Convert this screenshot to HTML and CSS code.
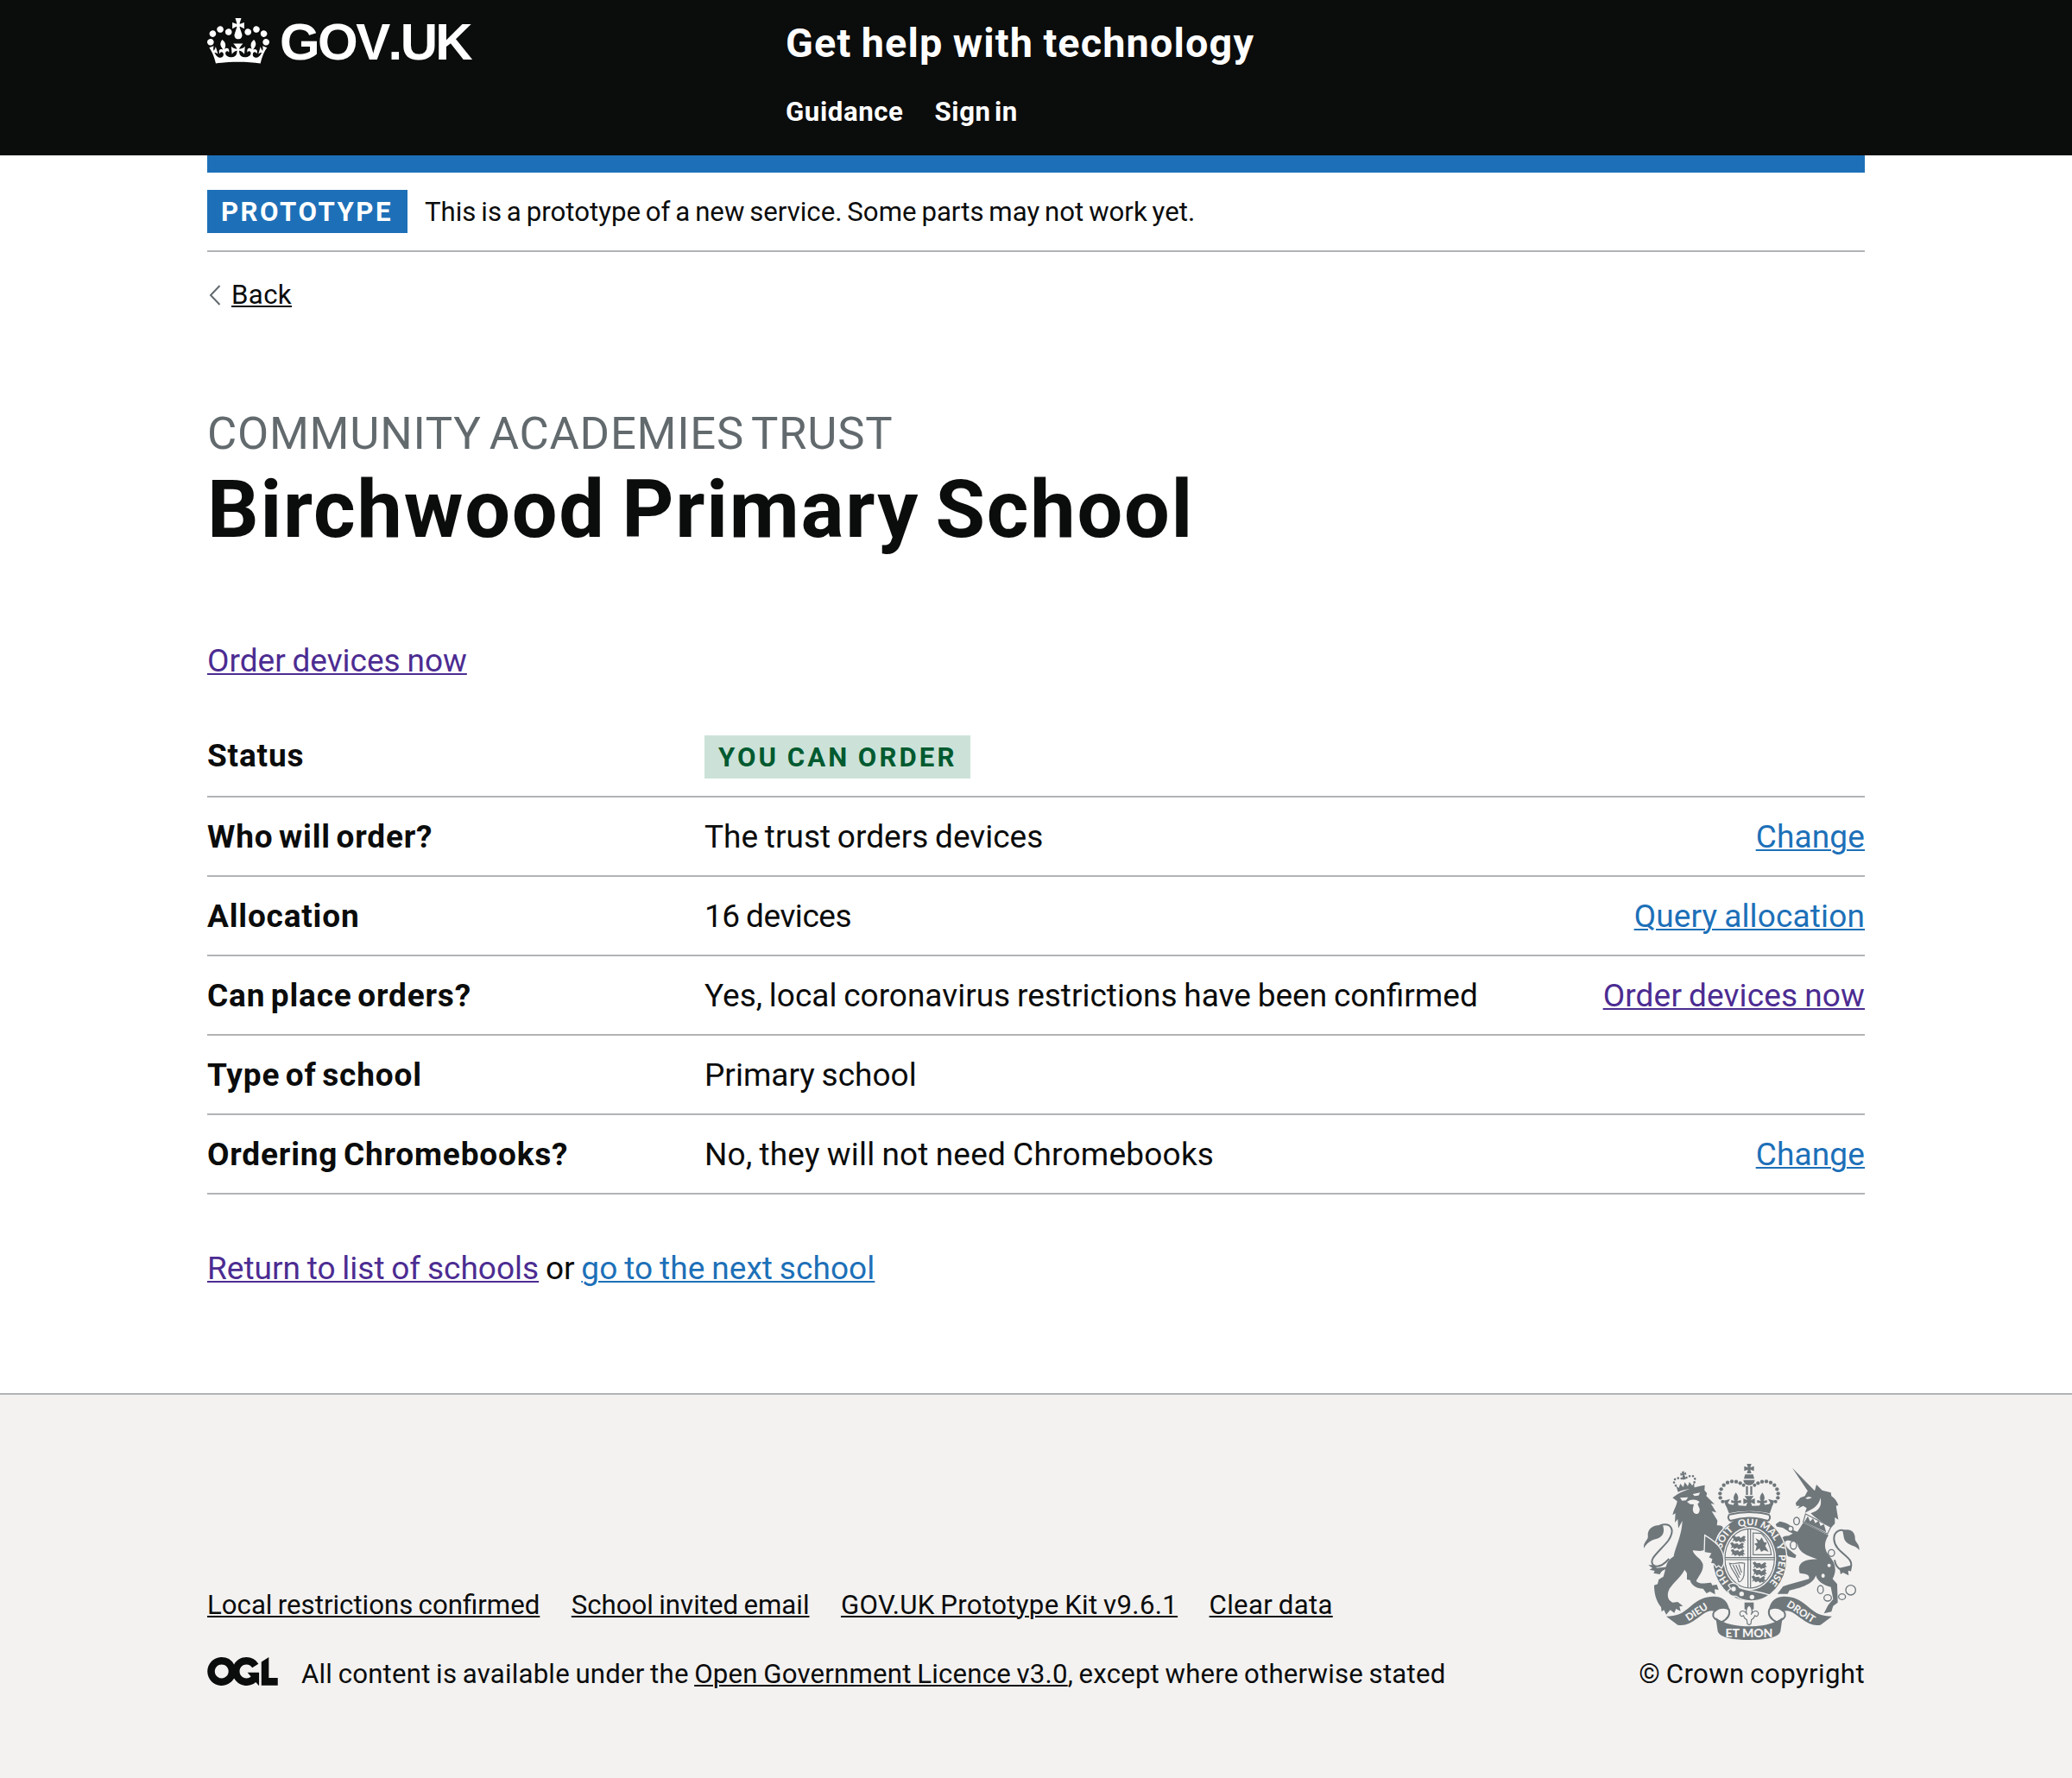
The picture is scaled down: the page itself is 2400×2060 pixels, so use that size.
FILE: index.html
```html
<!DOCTYPE html>
<html lang="en">
<head>
<meta charset="utf-8">
<title>Birchwood Primary School - Get help with technology</title>
<link rel="stylesheet" href="styles.css">
</head>
<body>
<header class="header">
  <div class="container header-row">
    <a class="logo" href="#">
      <svg class="logo-crown" viewBox="0 0 132 97" aria-hidden="true"><path fill="currentColor" fill-rule="evenodd" d="M25 30.2c3.5 1.5 7.7-.2 9.1-3.7 1.5-3.6-.2-7.8-3.9-9.2-3.6-1.4-7.6.3-9.1 3.9-1.4 3.5.3 7.5 3.9 9zM9 39.5c3.6 1.5 7.8-.2 9.2-3.7 1.5-3.6-.2-7.8-3.9-9.1-3.6-1.5-7.6.2-9.1 3.8-1.4 3.5.3 7.5 3.8 9zM4.4 57.2c3.5 1.5 7.7-.2 9.1-3.8 1.5-3.6-.2-7.7-3.9-9.1-3.5-1.5-7.6.3-9.1 3.8-1.4 3.5.3 7.6 3.9 9.1zm38.3-21.4c3.5 1.5 7.7-.2 9.1-3.8 1.5-3.6-.2-7.7-3.9-9.1-3.6-1.5-7.6.3-9.1 3.8-1.3 3.6.4 7.7 3.9 9.1zm64.4-5.6c-3.6 1.5-7.8-.2-9.1-3.7-1.5-3.6.2-7.8 3.8-9.2 3.6-1.4 7.7.3 9.2 3.9 1.3 3.5-.4 7.5-3.9 9zm15.9 9.3c-3.6 1.5-7.7-.2-9.1-3.7-1.5-3.6.2-7.8 3.7-9.1 3.6-1.5 7.7.2 9.2 3.8 1.5 3.5-.3 7.5-3.8 9zm4.7 17.7c-3.6 1.5-7.8-.2-9.2-3.8-1.5-3.6.2-7.7 3.9-9.1 3.6-1.5 7.7.3 9.2 3.8 1.3 3.5-.4 7.6-3.9 9.1zM89.3 35.8c-3.6 1.5-7.8-.2-9.2-3.8-1.4-3.6.2-7.7 3.9-9.1 3.6-1.5 7.7.3 9.2 3.8 1.4 3.6-.3 7.7-3.9 9.1zM69.7 17.7l8.9 4.7V9.3l-8.9 2.8c-.2-.3-.5-.6-.9-.9L72.4 0H59.6l3.5 11.2c-.3.3-.6.5-.9.9l-8.8-2.8v13.1l8.8-4.7c.3.3.6.7.9.9l-5 15.4v.1c-.2.8-.4 1.6-.4 2.4 0 4.1 3.1 7.5 7 8.1h.2c.3 0 .7.1 1 .1.4 0 .7 0 1-.1h.2c4-.6 7.1-4.1 7.1-8.1 0-.8-.1-1.7-.4-2.4V34l-5.1-15.4c.4-.2.7-.6 1-.9zM66 92.8c16.9 0 32.8 1.1 47.1 3.2 4-16.9 8.9-26.7 14-33.5l-9.6-3.4c1 4.9 1.1 7.2 0 10.2-1.5-1.4-3-4.3-4.2-8.7L108.6 76c2.8-2 5-3.2 7.5-3.3-4.4 9.4-10 11.9-13.6 11.2-4.3-.8-6.3-4.6-5.6-7.9 1-4.7 5.7-5.9 8-.5 4.3-8.7-3-11.4-7.6-8.8 7.1-7.2 7.9-13.5 2.1-21.1-8 6.1-8.1 12.3-4.5 20.8-4.7-5.4-12.1-2.5-9.5 6.2 3.4-5.2 7.9-2 7.2 3.1-.6 4.3-6.4 7.8-13.5 7.2-10.3-.9-10.9-8-11.2-13.8 2.5-.5 7.1 1.8 11 7.3L80.2 60c-4.1 4.4-8 5.3-12.3 5.4 1.4-4.4 8-11.6 8-11.6H55.5s6.4 7.2 7.9 11.6c-4.2-.1-8-1-12.3-5.4l1.4 16.4c3.9-5.5 8.5-7.7 10.9-7.3-.3 5.8-.9 12.8-11.1 13.8-7.2.6-12.9-2.9-13.5-7.2-.7-5 3.8-8.3 7.1-3.1 2.7-8.7-4.6-11.6-9.4-6.2 3.7-8.5 3.6-14.7-4.6-20.8-5.8 7.6-5 13.9 2.2 21.1-4.7-2.6-11.9.1-7.7 8.8 2.3-5.5 7.1-4.2 8.1.5.7 3.3-1.3 7.1-5.7 7.9-3.5.7-9-1.8-13.5-11.2 2.5.1 4.7 1.3 7.5 3.3l-4.7-15.4c-1.2 4.4-2.7 7.2-4.3 8.7-1.1-3-.9-5.3 0-10.2l-9.5 3.4c5 6.9 9.9 16.7 14 33.5 14.8-2.1 30.8-3.2 47.7-3.2z"/></svg>
      <span class="logo-text">GOV.UK</span>
    </a>
    <div class="header-content">
      <a class="service-name" href="#">Get help with technology</a>
      <nav class="nav"><a href="#">Guidance</a><a href="#">Sign in</a></nav>
    </div>
  </div>
</header>

<div class="container">
  <div class="phase-banner">
    <strong class="tag tag-phase">PROTOTYPE</strong>
    <span>This is a prototype of a new service. Some parts may not work yet.</span>
  </div>
  <div class="back">
    <svg class="back-arrow" viewBox="0 0 14 24" aria-hidden="true"><path d="M12.5 1 2 12l10.500 11" fill="none" stroke="#626a6e" stroke-width="2"/></svg>
    <a class="back-link" href="#">Back</a>
  </div>
  <main>
    <div class="caption">COMMUNITY ACADEMIES TRUST</div>
    <h1 class="heading">Birchwood Primary School</h1>
    <p class="body"><a class="link visited" href="#">Order devices now</a></p>
    <dl class="summary">
      <div class="row"><dt>Status</dt><dd><strong class="tag tag-green">YOU CAN ORDER</strong></dd></div>
      <div class="row"><dt>Who will order?</dt><dd>The trust orders devices</dd><dd class="action"><a class="link" href="#">Change</a></dd></div>
      <div class="row"><dt>Allocation</dt><dd class="count">16 devices</dd><dd class="action"><a class="link" href="#">Query allocation</a></dd></div>
      <div class="row"><dt>Can place orders?</dt><dd>Yes, local coronavirus restrictions have been confirmed</dd><dd class="action"><a class="link visited" href="#">Order devices now</a></dd></div>
      <div class="row"><dt>Type of school</dt><dd>Primary school</dd></div>
      <div class="row"><dt>Ordering Chromebooks?</dt><dd class="wide">No, they will not need Chromebooks</dd><dd class="action"><a class="link" href="#">Change</a></dd></div>
    </dl>
    <p class="body"><a class="link visited" href="#">Return to list of schools</a> or <a class="link next" href="#">go to the next school</a></p>
  </main>
</div>

<footer class="footer">
  <div class="container footer-row">
    <div class="footer-main">
      <nav class="footer-links">
        <a href="#">Local restrictions confirmed</a><a href="#">School invited email</a><a class="kit" href="#">GOV.UK Prototype Kit v9.6.1</a><a class="kit" href="#">Clear data</a>
      </nav>
      <div class="licence">
        <svg class="ogl" viewBox="0 0 483.2 195.7" aria-hidden="true"><path fill="currentColor" d="M421.5 142.8V.1l-50.7 32.3v161.1h112.4v-50.7zm-122.3-9.6A47.12 47.12 0 0 1 221 97.8c0-26 21.1-47.1 47.1-47.1 16.7 0 31.4 8.7 39.7 21.8l42.7-27.2A97.63 97.63 0 0 0 268.1 0c-36.5 0-68.3 20.1-85.1 49.7A98 98 0 0 0 97.8 0C43.9 0 0 43.9 0 97.8s43.9 97.8 97.8 97.8c36.5 0 68.3-20.1 85.1-49.7a97.76 97.76 0 0 0 149.6 25.4l19.4 22.2h3v-87.8h-80l24.3 27.5zM97.8 145c-26 0-47.1-21.1-47.1-47.1s21.1-47.1 47.1-47.1 47.1 21.1 47.1 47.1S123.8 145 97.8 145"/></svg>
        <span>All content is available under the <a href="#">Open Government Licence v3.0</a>, except where otherwise stated</span>
      </div>
    </div>
    <div class="copyright">
      <svg class="crest" viewBox="72 78 750 612" aria-hidden="true">
        <defs>
          <path id="garter" d="M440 521A101 115 0 0 1 440 291A101 115 0 0 1 440 521"/>
          <g id="half-crown">
            <g class="ink"><circle cx="346" cy="209" r="6"/><circle cx="338" cy="196" r="6.500"/><circle cx="337" cy="181" r="6.500"/><circle cx="341" cy="166" r="6.500"/><circle cx="350" cy="152" r="6.500"/><circle cx="363" cy="143" r="6.500"/><circle cx="378" cy="139" r="6.500"/><circle cx="393" cy="140" r="6.500"/><circle cx="407" cy="145" r="6.500"/><circle cx="419" cy="152" r="6"/>
            <path d="M392 178C402 190 402 200 397 207L410 204V214L399 214L402 226H382L386 214L376 214V204L388 207C382 200 383 190 392 178ZM350 206L372 200 364 214 376 226 358 226Z"/></g>
          </g>
          <g id="scroll">
            <path class="ink" d="M150 608C185 608 205 600 235 573C265 548 290 537 325 540C350 542 366 560 370 588C355 572 335 577 322 592C300 582 285 594 258 615C232 634 215 642 190 638Z"/>
            <path class="line" d="M368 584C350 572 318 580 313 600C310 614 324 622 342 628C362 618 374 604 368 584Z"/>
          </g>
          <g id="lions" class="ink"><path d="M0 4L8 0 14 6 26 4 30 10 42 2 48 6 44 12 50 18 42 20 46 26 36 22 30 26 24 20 14 24 10 18 2 22 6 14Z"/></g>
        </defs>
        <!-- lion -->
        <path class="ink" d="M172 196L190 183C215 168 250 158 284 152L283 170L292 181L289 190L318 218L305 216L324 247L308 243L328 275L326 292C340 290 352 296 345 306C325 322 320 345 326 355C345 370 352 400 349 425L342 439L332 430L324 436L318 424L306 424L308 410L298 404L306 390L284 386L292 376L268 381L242 379C246 398 268 404 277 425C282 450 262 468 254 486C272 500 288 490 306 491L310 500L326 498L332 516L318 514L320 532L302 522L290 528L278 512C258 512 236 500 233 482L222 480L222 458L214 446C198 476 164 500 158 520C152 538 156 552 172 560L190 558L208 572L196 574L200 590L184 582L178 596L164 586L150 602L142 586L134 592L132 576C116 556 108 530 108 500L120 496L124 480L140 470C152 440 144 420 176 400C180 370 204 330 206 276L192 302L190 270L180 282L182 250L172 256C176 236 186 225 188 208Z"/>
        <path class="paper" d="M198 196L226 194 219 205 205 206ZM242 183L268 178 262 188 248 190ZM222 210C236 200 252 200 266 210L259 218L266 234C267 248 260 253 254 252C246 251 241 243 243 231L246 219L233 218Z"/>
        <path class="line" d="M160 408C140 430 120 440 105 430C85 410 130 380 157 345C182 308 168 280 128 292"/>
        <path class="ink" d="M72 372C70 345 90 345 86 325C86 300 110 288 138 292C146 312 140 334 112 340C92 346 80 358 72 372ZM88 430L106 430 118 440 156 436C146 450 134 446 128 462L106 458 110 450 92 446 102 440Z"/>
        <g transform="rotate(-10 214 140)"><path class="ink" d="M182 148L190 158 198 144 206 158 214 142 222 158 230 144 238 158 246 148 243 172C224 166 204 166 185 172Z"/><path class="dots" d="M181 148C168 124 190 118 211 130M247 148C260 124 238 118 217 130"/><path class="ink" d="M209 104H219L217 111 224 108V118L217 115 220 132H208L211 115 204 118V108L211 111Z"/></g>
        <!-- unicorn -->
        <path class="ink" d="M588 92L666 172 648 182ZM600 214L616 196L632 190L640 174L666 172L672 150L692 170L722 178L724 190C736 198 744 210 748 222L740 224L748 272L736 264L736 286L720 303C700 282 672 272 652 250C680 242 692 226 686 196C680 226 655 238 632 248L638 232L626 224L606 234L614 224L602 224Z"/>
        <path class="paper" d="M634 198C642 190 650 192 656 196C648 200 640 202 634 198Z"/>
        <path class="ink" d="M626 283L714 326C700 348 694 372 718 400C738 424 744 448 728 478L744 496L746 560L730 572L724 592L698 598L712 570L730 548L722 506C694 500 674 484 670 466C660 500 606 512 578 518L572 530L536 530L556 504L574 498L646 478C650 460 630 460 614 458C602 424 630 408 676 410C650 398 612 392 606 356C590 352 574 336 562 350C566 372 584 380 602 396L598 406L574 400L548 362C542 344 550 328 576 328L590 320C574 314 562 304 554 300L534 296L530 288L544 278C566 282 584 288 590 308L606 314Z"/>
        <path class="paper" d="M634 250L722 298 710 324 624 280Z"/>
        <path class="thin" d="M634 252L722 298 710 322 626 280Z"/>
        <path class="ink" d="M630 280L642 260 650 278 660 268 668 284 680 276 686 294 698 288 706 316Z"/>
        <path class="line" d="M735 412C740 445 772 462 790 440C808 400 736 390 733 340C732 310 760 300 778 316"/>
        <path class="ink" d="M762 310C790 300 808 316 806 340C808 352 822 356 821 378C808 360 790 364 776 350C764 340 768 324 762 310ZM752 440L796 430 792 452 782 448 784 466 764 456 756 462Z"/>
        <g class="chain"><ellipse cx="603" cy="277" rx="10" ry="13"/><ellipse cx="582" cy="304" rx="9" ry="9"/><ellipse cx="592" cy="361" rx="11" ry="14"/><ellipse cx="724" cy="388" rx="11" ry="12"/><circle cx="716" cy="431" r="8"/><ellipse cx="695" cy="467" rx="8" ry="9"/><ellipse cx="686" cy="515" rx="10" ry="14"/><ellipse cx="711" cy="544" rx="13" ry="11"/><ellipse cx="761" cy="540" rx="12" ry="10"/><circle cx="791" cy="517" r="17"/></g>
        <!-- garter and shield -->
        <ellipse class="garter" cx="440" cy="408" rx="129" ry="148"/>
        <ellipse class="paper" cx="440" cy="407" rx="92" ry="110"/>
        <ellipse class="thin" cx="440" cy="407" rx="86" ry="103"/>
        <path class="thin" d="M434 304V510M443 304V510M354 404H526M354 411H526"/>
        <use href="#lions" x="378" y="326"/><use href="#lions" x="372" y="350"/><use href="#lions" x="374" y="374"/>
        <use href="#lions" x="450" y="418"/><use href="#lions" x="450" y="442"/><use href="#lions" x="446" y="466"/>
        <path class="thin" d="M452 318L480 320C500 338 512 360 515 394L452 394Z"/>
        <path class="ink" d="M460 336L474 344 482 334 490 350 500 352 494 364 506 384 490 378 480 384 474 372 460 382 464 364 456 356 468 352Z"/>
        <path class="thin" d="M370 424C386 430 402 416 422 424L420 466C416 480 408 490 402 488C396 462 378 452 370 424ZM382 430L404 474M392 430L408 464M402 428L412 456"/>
        <path class="garter" d="M366 500C376 488 398 492 404 508C440 522 470 520 508 534C470 562 420 560 392 538C378 540 366 534 364 520L374 512Z"/>
        <g class="paper"><circle cx="384" cy="513" r="8"/><circle cx="412" cy="530" r="8"/><circle cx="448" cy="541" r="8"/></g>
        <g class="motto">
          <text><textPath href="#garter" startOffset="16%">HO</textPath></text>
          <text><textPath href="#garter" startOffset="35.500%">SOIT</textPath></text>
          <text><textPath href="#garter" startOffset="49%">QUI</textPath></text>
          <text><textPath href="#garter" startOffset="60.500%">MAL</textPath></text>
          <text><textPath href="#garter" startOffset="69.500%">Y</textPath></text>
          <text><textPath href="#garter" startOffset="81%">PENSE</textPath></text>
        </g>
        <!-- lion's forepaw resting on the garter -->
        <path class="garter" d="M284 326C304 338 326 352 338 372C350 392 352 412 349 428L342 441L332 432L324 438L316 426L304 424L308 410L296 404L304 390L282 386Z"/>
        <!-- royal crown -->
        <use href="#half-crown"/><use href="#half-crown" transform="translate(876 0) scale(-1 1)"/>
        <path class="ink" d="M430 78H446L442 91 455 86V103L442 98 446 111H430L434 98 421 103V86L434 91ZM424 115H452L456 130H420ZM418 134H458C456 146 448 152 438 152S420 146 418 134ZM427 156H434V186H427ZM442 156H449V186H442ZM422 190H454L444 204 458 198V218L444 212 450 228H426L432 212 418 218V198L432 204ZM354 214C390 228 486 228 522 214L510 250C466 240 410 240 368 250Z"/>
        <path class="line cushion" d="M370 254C414 244 462 244 506 254C514 262 510 274 502 276C460 262 416 262 374 276C366 274 362 262 370 254Z"/>
        <!-- scroll -->
        <use href="#scroll"/><use href="#scroll" transform="translate(876 0) scale(-1 1)"/>
        <path class="ink" d="M322 612C350 635 395 643 438 643S526 635 554 612L547 660C540 684 490 690 438 690S338 684 329 660Z"/>
        <path class="ink" d="M422 560H454V584H422Z"/>
        <path class="thin fleur" d="M438 568C450 580 450 592 445 602C456 582 472 590 470 600C469 610 460 610 458 604C456 616 448 618 446 620L444 634 438 638 432 634 430 620C428 618 420 616 418 604C416 610 407 610 406 600C404 590 420 582 431 602C426 592 426 580 438 568Z"/>
        <g class="motto scroll-text">
          <text transform="translate(262 603) rotate(-33)">DIEU</text>
          <text class="scroll-centre" transform="translate(438 681)">ET MON</text>
          <text transform="translate(612 602) rotate(33)">DROIT</text>
        </g>
      </svg>
      <span>© Crown copyright</span>
    </div>
  </div>
</footer>
</body>
</html>
```
FILE: styles.css
```css
* { box-sizing: border-box; }

body {
  margin: 0;
  background: #fff;
  color: #0b0c0c;
  font: 31.2px/40px Roboto, "Liberation Sans", sans-serif;
  word-spacing: -.045em;
}

a { color: inherit; text-decoration: underline; text-decoration-thickness: 2px; text-underline-offset: 2px; }
h1, p, dl, dd, dt { margin: 0; }
svg { display: block; flex: none; }

.container { width: 1920px; margin: 0 auto; }

/* Header */
.header { height: 180px; background: #0b0c0c; color: #fff; }
.header a { text-decoration: none; }
.header-row { display: flex; }
.logo { display: flex; width: 670px; padding-top: 21px; }
.logo-crown { width: 72px; height: 53px; }
.logo-text {
  margin-left: 12px;
  font: bold 60px/56px "Liberation Sans", Arial, sans-serif;
  font-kerning: none;
  letter-spacing: -2.6px;
}
.header-content { display: flex; flex-direction: column; gap: 35px; padding-top: 25px; font-weight: bold; }
.service-name { font-size: 46.8px; line-height: 50px; letter-spacing: .024em; }
.nav { display: flex; gap: 36px; letter-spacing: .019em; word-spacing: -.13em; }

/* Phase banner and back link */
.phase-banner {
  display: flex;
  gap: 20px;
  padding: 20px 0;
  border-top: 20px solid #1d70b8;
  border-bottom: 2px solid #b1b4b6;
  height: 112px;
  line-height: 52px;
  word-spacing: -.06em;
}
.tag { display: inline-block; height: 50px; padding: 0 14px 0 16px; font-size: 31.2px; line-height: 52px; white-space: nowrap; }
.tag-phase { width: 232px; background: #1d70b8; color: #fff; letter-spacing: 2.5px; }
.tag-green { width: 308px; margin-top: 1px; background: #cce2d8; color: #005a30; letter-spacing: 3.1px; }
.back { display: flex; align-items: center; padding-top: 30px; }
.back-arrow { width: 14px; height: 24px; margin: 0 12px 0 2px; }
.back-link { letter-spacing: .012em; }

/* Content */
.caption { margin-top: 110px; color: #626a6e; font-size: 52.6px; line-height: 60px; letter-spacing: .0145em; word-spacing: -.09em; }
.heading { margin: 8px 0 101px; font-size: 93.5px; line-height: 100px; letter-spacing: .019em; word-spacing: -.07em; }
.body { font-size: 37px; line-height: 50px; }
.link { color: #1d70b8; }
.visited { color: #4c2c92; }
.next { letter-spacing: .002em; }

.summary { margin: 39px 0 61px; font-size: 37px; line-height: 50px; }
.row { display: flex; padding: 21px 0 19px; border-bottom: 2px solid #b1b4b6; }
.row:first-child { padding-bottom: 20px; }
.row dt { width: 576px; font-weight: bold; letter-spacing: .022em; word-spacing: -.09em; }
.row dd { flex: none; }
.row .count { letter-spacing: -.012em; }
.row .wide { letter-spacing: .006em; }
.row dd .tag { display: block; }
.row .action { margin-left: auto; letter-spacing: .004em; }

/* Footer */
.footer { margin-top: 119px; height: 446px; padding-top: 80px; border-top: 2px solid #b1b4b6; background: #f3f2f1; }
.footer-row { display: flex; justify-content: space-between; align-items: flex-end; }
.footer-main { display: flex; flex-direction: column; gap: 40px; }
.footer-links { display: flex; gap: 36.5px; }
.kit { letter-spacing: .01em; }
.licence { display: flex; align-items: flex-start; gap: 27px; letter-spacing: .0065em; }
.ogl { width: 82px; height: 33px; }
.copyright { display: flex; flex-direction: column; align-items: flex-end; gap: 20px; letter-spacing: .012em; }
.crest { width: 250px; height: 204px; margin-right: 6px; }

/* Royal coat of arms */
.ink { fill: #6f777b; }
.paper { fill: #f3f2f1; }
.line { fill: none; stroke: #6f777b; stroke-width: 6; }
.cushion { fill: #f3f2f1; }
.thin { fill: none; stroke: #6f777b; stroke-width: 3.5; }
.fleur { fill: #f3f2f1; }
.dots { fill: none; stroke: #6f777b; stroke-width: 8; stroke-linecap: round; stroke-dasharray: 0 12; }
.chain { fill: #f3f2f1; stroke: #6f777b; stroke-width: 4; }
.garter { fill: #6f777b; stroke: #f3f2f1; stroke-width: 4; }
.motto { fill: #f3f2f1; font: 900 34px/1 Lato, sans-serif; text-anchor: middle; word-spacing: 0; letter-spacing: 0; }
.scroll-text { font-size: 35px; }
.scroll-centre { font-size: 42px; }
```
